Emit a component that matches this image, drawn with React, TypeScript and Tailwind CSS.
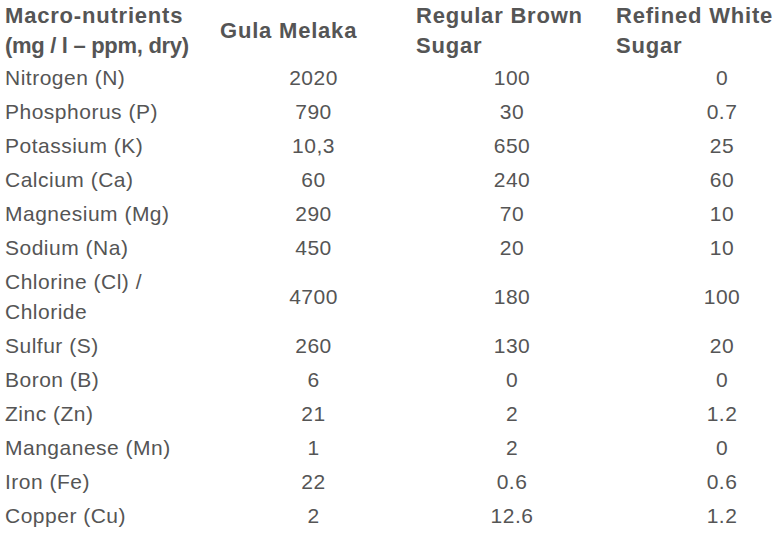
const rows: [string, string, string, string][] = [
  ['Nitrogen (N)', '2020', '100', '0'],
  ['Phosphorus (P)', '790', '30', '0.7'],
  ['Potassium (K)', '10,3', '650', '25'],
  ['Calcium (Ca)', '60', '240', '60'],
  ['Magnesium (Mg)', '290', '70', '10'],
  ['Sodium (Na)', '450', '20', '10'],
  ['Chlorine (Cl) / Chloride', '4700', '180', '100'],
  ['Sulfur (S)', '260', '130', '20'],
  ['Boron (B)', '6', '0', '0'],
  ['Zinc (Zn)', '21', '2', '1.2'],
  ['Manganese (Mn)', '1', '2', '0'],
  ['Iron (Fe)', '22', '0.6', '0.6'],
  ['Copper (Cu)', '2', '12.6', '1.2'],
]

export default function App() {
  return (
    <div className="w-[774px] h-[533px] overflow-hidden bg-white font-['Liberation_Sans',Arial,sans-serif] text-[#555555]">
      <table className="table-fixed border-collapse w-[832px]">
        <colgroup>
          <col className="w-[215px]" />
          <col className="w-[197px]" />
          <col className="w-[200px]" />
          <col className="w-[220px]" />
        </colgroup>
        <thead>
          <tr className="text-[22px] leading-[30px] font-bold tracking-[0.8px] text-left">
            <th className="pl-[5px] pt-[1px] align-middle">
              Macro-nutrients
              <br />
              <span className="tracking-[-0.3px]">(mg / l – ppm, dry)</span>
            </th>
            <th className="pl-[5px] pt-[1px] align-middle">Gula Melaka</th>
            <th className="pl-[4px] pt-[1px] align-middle">Regular Brown Sugar</th>
            <th className="pl-[4px] pt-[1px] pr-2 align-middle">Refined White Sugar</th>
          </tr>
        </thead>
        <tbody>
          {rows.map((r, i) => (
            <tr key={i} className="text-[21px] leading-[30px] tracking-[0.5px]">
              <td className="pl-[5px] py-[2px] pr-2 align-middle">{r[0]}</td>
              <td className="py-[2px] text-center align-middle">{r[1]}</td>
              <td className="py-[2px] text-center align-middle">{r[2]}</td>
              <td className="py-[2px] text-center align-middle">{r[3]}</td>
            </tr>
          ))}
        </tbody>
      </table>
    </div>
  )
}
